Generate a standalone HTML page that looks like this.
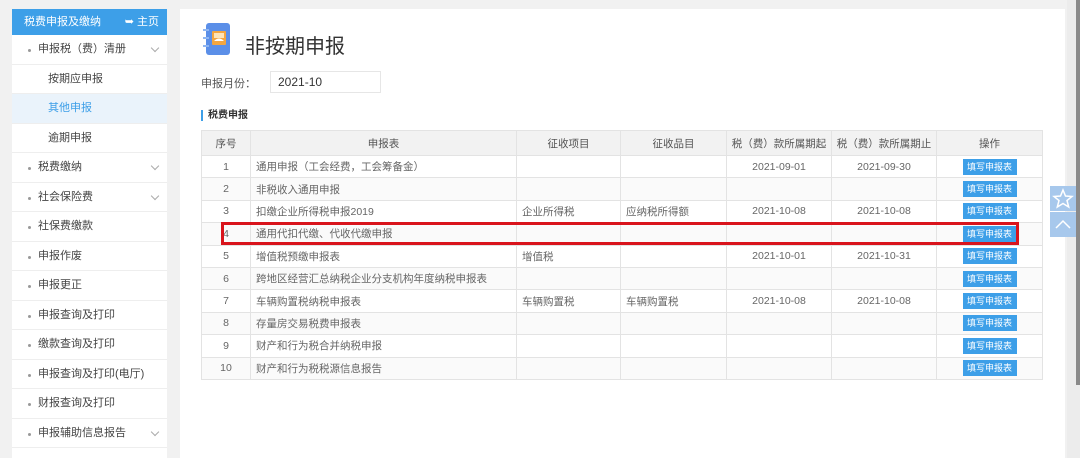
<!DOCTYPE html>
<html><head><meta charset="utf-8">
<style>
*{margin:0;padding:0;box-sizing:border-box}
body{width:1080px;height:458px;background:#f1f1f1;font-family:"Liberation Sans","Noto Sans CJK SC",sans-serif;font-size:12px;color:#555;position:relative;overflow:hidden}
.side{position:absolute;left:12px;top:9px;width:155px;height:449px;background:#fff}
.sh{height:26px;background:#3d9fe8;color:#fff;font-size:11px;line-height:26px;padding-left:12px;position:relative}
.sh span{position:absolute;right:8px;top:0}
.it{height:29.5px;line-height:29.5px;border-bottom:1px solid #eee;padding-left:36px;position:relative;font-size:11px;color:#444}
.it.b:before{content:"";position:absolute;left:16px;top:14px;width:3px;height:3px;background:#999;border-radius:50%}
.it.b{padding-left:26px}
.it.sel{background:#eaf3fb;color:#3d9fe8}
.chev{position:absolute;right:9px;top:10px;width:6px;height:6px;border-right:1px solid #aaa;border-bottom:1px solid #aaa;transform:rotate(45deg)}
.main{position:absolute;left:180px;top:9px;width:885px;height:449px;background:#fff}
.title{position:absolute;left:245px;top:30px;font-size:20px;color:#333}
.lbl{position:absolute;left:201px;top:75px;font-size:11px;color:#555}
.inp{position:absolute;left:270px;top:71px;width:111px;height:22px;border:1px solid #e6e6e6;font-size:12px;line-height:20px;padding-left:7px;color:#333}
.sec{position:absolute;left:201px;top:110px;font-size:10px;font-weight:bold;color:#333;border-left:2px solid #3d9fe8;padding-left:5px;line-height:11px}
table{position:absolute;left:201px;top:130px;width:841px;border-collapse:collapse;font-size:10.5px;color:#666;table-layout:fixed}
td,th{border:1px solid #e3e3e3;height:22.4px;font-weight:normal;text-align:center;padding:0;white-space:nowrap;overflow:hidden}
th{height:25px;background:#f2f2f2;color:#555}
tr:nth-child(odd) td{background:#fafafa}
td.l{text-align:left;padding-left:5px}
.btn{display:inline-block;background:#3d9fe8;color:#fff;font-size:9px;width:54px;height:16px;line-height:16px;vertical-align:middle;white-space:nowrap;overflow:hidden}
.red{position:absolute;left:221px;top:222px;width:798px;height:23px;border:3px solid #d9141c}
.fb{position:absolute;left:1050px;width:26px;height:25px;background:#a7c8ec;z-index:5}
.sb{position:absolute;left:1067px;top:0;width:13px;height:458px;background:#ececec}
.th{position:absolute;left:1076px;top:0;width:4px;height:385px;background:#8a8a8a}
</style></head><body>
<div class="side">
<div class="sh">税费申报及缴纳<span>➥ 主页</span></div>
<div class="it b">申报税（费）清册<i class="chev"></i></div>
<div class="it">按期应申报</div>
<div class="it sel">其他申报</div>
<div class="it">逾期申报</div>
<div class="it b">税费缴纳<i class="chev"></i></div>
<div class="it b">社会保险费<i class="chev"></i></div>
<div class="it b">社保费缴款</div>
<div class="it b">申报作废</div>
<div class="it b">申报更正</div>
<div class="it b">申报查询及打印</div>
<div class="it b">缴款查询及打印</div>
<div class="it b">申报查询及打印(电厅)</div>
<div class="it b">财报查询及打印</div>
<div class="it b">申报辅助信息报告<i class="chev"></i></div>
</div>
<div class="main"></div>
<div class="sb"></div><div class="th"></div>
<svg style="position:absolute;left:202px;top:21px" width="30" height="36" viewBox="0 0 30 36">
<rect x="4" y="2" width="24" height="32" rx="3" fill="#5b8fe8"/>
<rect x="10" y="10" width="14" height="14" rx="1" fill="#f4a640"/>
<rect x="12" y="12" width="10" height="5" fill="#fde4b8"/>
<path d="M12 20 Q17 15 22 20 Z" fill="#fff"/>
<rect x="1" y="8" width="6" height="2" fill="#8fb6f2"/><rect x="1" y="16" width="6" height="2" fill="#8fb6f2"/><rect x="1" y="24" width="6" height="2" fill="#8fb6f2"/>
</svg>
<div class="title">非按期申报</div>
<div class="lbl">申报月份：</div>
<div class="inp">2021-10</div>
<div class="sec">税费申报</div>
<table>
<colgroup><col style="width:49px"><col style="width:266px"><col style="width:104px"><col style="width:106px"><col style="width:105px"><col style="width:105px"><col style="width:106px"></colgroup>
<tr><th>序号</th><th>申报表</th><th>征收项目</th><th>征收品目</th><th>税（费）款所属期起</th><th>税（费）款所属期止</th><th>操作</th></tr>
<tr><td>1</td><td class="l">通用申报（工会经费，工会筹备金）</td><td></td><td></td><td>2021-09-01</td><td>2021-09-30</td><td><span class="btn">填写申报表</span></td></tr>
<tr><td>2</td><td class="l">非税收入通用申报</td><td></td><td></td><td></td><td></td><td><span class="btn">填写申报表</span></td></tr>
<tr><td>3</td><td class="l">扣缴企业所得税申报2019</td><td class="l">企业所得税</td><td class="l">应纳税所得额</td><td>2021-10-08</td><td>2021-10-08</td><td><span class="btn">填写申报表</span></td></tr>
<tr><td>4</td><td class="l">通用代扣代缴、代收代缴申报</td><td></td><td></td><td></td><td></td><td><span class="btn">填写申报表</span></td></tr>
<tr><td>5</td><td class="l">增值税预缴申报表</td><td class="l">增值税</td><td></td><td>2021-10-01</td><td>2021-10-31</td><td><span class="btn">填写申报表</span></td></tr>
<tr><td>6</td><td class="l">跨地区经营汇总纳税企业分支机构年度纳税申报表</td><td></td><td></td><td></td><td></td><td><span class="btn">填写申报表</span></td></tr>
<tr><td>7</td><td class="l">车辆购置税纳税申报表</td><td class="l">车辆购置税</td><td class="l">车辆购置税</td><td>2021-10-08</td><td>2021-10-08</td><td><span class="btn">填写申报表</span></td></tr>
<tr><td>8</td><td class="l">存量房交易税费申报表</td><td></td><td></td><td></td><td></td><td><span class="btn">填写申报表</span></td></tr>
<tr><td>9</td><td class="l">财产和行为税合并纳税申报</td><td></td><td></td><td></td><td></td><td><span class="btn">填写申报表</span></td></tr>
<tr><td>10</td><td class="l">财产和行为税税源信息报告</td><td></td><td></td><td></td><td></td><td><span class="btn">填写申报表</span></td></tr>
</table>
<div class="red"></div>
<div class="fb" style="top:186px"><svg width="26" height="25"><path d="M13 4 L15.5 10 L22 10.5 L17 14.5 L18.7 21 L13 17.5 L7.3 21 L9 14.5 L4 10.5 L10.5 10 Z" fill="none" stroke="#fff" stroke-width="1.5"/></svg></div>
<div class="fb" style="top:212px"><svg width="26" height="25"><path d="M6 16 L13 9 L20 16" fill="none" stroke="#fff" stroke-width="1.5"/></svg></div>
</body></html>
